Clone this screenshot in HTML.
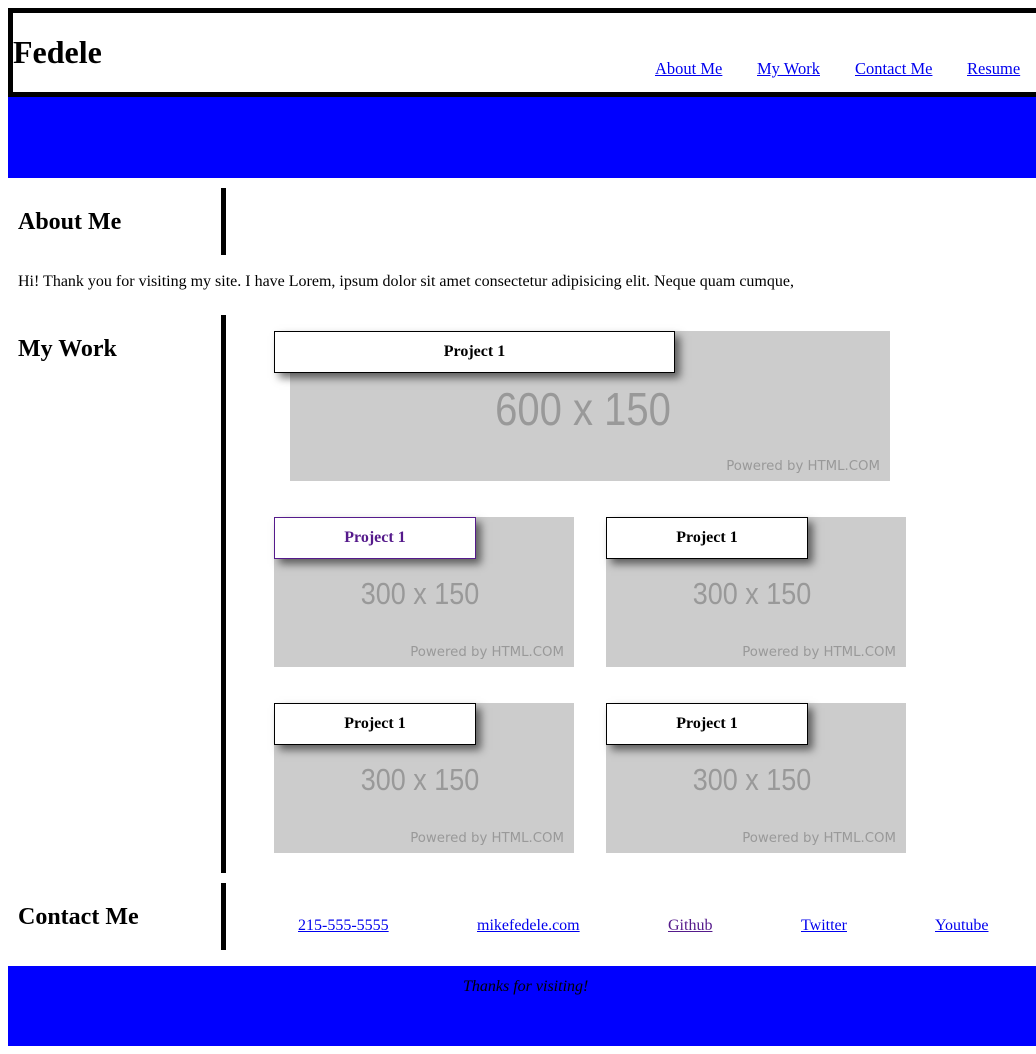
<!DOCTYPE html>
<html><head><meta charset="utf-8"><style>
*{margin:0;padding:0;box-sizing:border-box}
body{width:1036px;height:1054px;position:relative;background:#fff;font-family:"Liberation Serif",serif;overflow:hidden;color:#000}
.a{position:absolute}
a{color:#00e;text-decoration:underline}
.hdr{left:8px;top:8px;width:1040px;height:89px;border:5px solid #000;background:#fff}
.h1{left:13px;top:34px;font-size:32px;font-weight:bold;line-height:36px}
.nav{top:59px;font-size:16.5px;line-height:20px}
.blue{background:#00f}
.bar{left:221px;width:5px;background:#000}
.h2{left:18px;font-size:24px;font-weight:bold;line-height:28px}
.img{background:#ccc;overflow:hidden}
.img .t{position:absolute;left:0;right:0;text-align:center;font-family:"Liberation Sans",sans-serif;color:#999;transform:translateX(-4px) scaleX(0.87)}
.img .t.w{transform:translateX(-7px) scaleX(0.87)}
.img .p{position:absolute;right:10px;bottom:7px;font-family:"DejaVu Sans",sans-serif;font-size:13.3px;color:#999}
.lbl{background:#fff;border:1px solid #000;box-shadow:5px 5px 8px rgba(0,0,0,.55);text-align:center;font-weight:bold;font-size:16px;line-height:40px;height:42px}
.cl{top:916px;font-size:16px;line-height:20px}
</style></head><body>
<div class="a hdr"></div>
<div class="a h1">Fedele</div>
<a class="a nav" style="left:655px">About Me</a>
<a class="a nav" style="left:757px">My Work</a>
<a class="a nav" style="left:855px">Contact Me</a>
<a class="a nav" style="left:967px">Resume</a>
<div class="a blue" style="left:8px;top:97px;width:1028px;height:81px"></div>

<div class="a bar" style="top:188px;height:67px"></div>
<div class="a h2" style="top:208px">About Me</div>
<div class="a" style="left:18px;top:272px;font-size:16px;line-height:19px">Hi! Thank you for visiting my site. I have Lorem, ipsum dolor sit amet consectetur adipisicing elit. Neque quam cumque,</div>

<div class="a bar" style="top:315px;height:558px"></div>
<div class="a h2" style="top:335px">My Work</div>

<div class="a img" style="left:290px;top:331px;width:600px;height:150px"><div class="t w" style="top:52px;font-size:46px;line-height:52px">600 x 150</div><div class="p">Powered by HTML.COM</div></div>
<div class="a lbl" style="left:274px;top:331px;width:401px">Project 1</div>

<div class="a img" style="left:274px;top:517px;width:300px;height:150px"><div class="t" style="top:59px;font-size:31px;line-height:36px">300 x 150</div><div class="p">Powered by HTML.COM</div></div>
<div class="a lbl" style="left:274px;top:517px;width:202px;border-color:#551a8b;color:#551a8b">Project 1</div>
<div class="a img" style="left:606px;top:517px;width:300px;height:150px"><div class="t" style="top:59px;font-size:31px;line-height:36px">300 x 150</div><div class="p">Powered by HTML.COM</div></div>
<div class="a lbl" style="left:606px;top:517px;width:202px">Project 1</div>

<div class="a img" style="left:274px;top:703px;width:300px;height:150px"><div class="t" style="top:59px;font-size:31px;line-height:36px">300 x 150</div><div class="p">Powered by HTML.COM</div></div>
<div class="a lbl" style="left:274px;top:703px;width:202px">Project 1</div>
<div class="a img" style="left:606px;top:703px;width:300px;height:150px"><div class="t" style="top:59px;font-size:31px;line-height:36px">300 x 150</div><div class="p">Powered by HTML.COM</div></div>
<div class="a lbl" style="left:606px;top:703px;width:202px">Project 1</div>

<div class="a bar" style="top:883px;height:67px"></div>
<div class="a h2" style="top:903px">Contact Me</div>
<a class="a cl" style="left:298px">215-555-5555</a>
<a class="a cl" style="left:477px">mikefedele.com</a>
<a class="a cl" style="left:668px;color:#551a8b">Github</a>
<a class="a cl" style="left:801px">Twitter</a>
<a class="a cl" style="left:935px">Youtube</a>

<div class="a blue" style="left:8px;top:966px;width:1028px;height:80px"></div>
<div class="a" style="left:463px;top:977px;font-size:16px;font-style:italic;line-height:20px">Thanks for visiting!</div>
</body></html>
